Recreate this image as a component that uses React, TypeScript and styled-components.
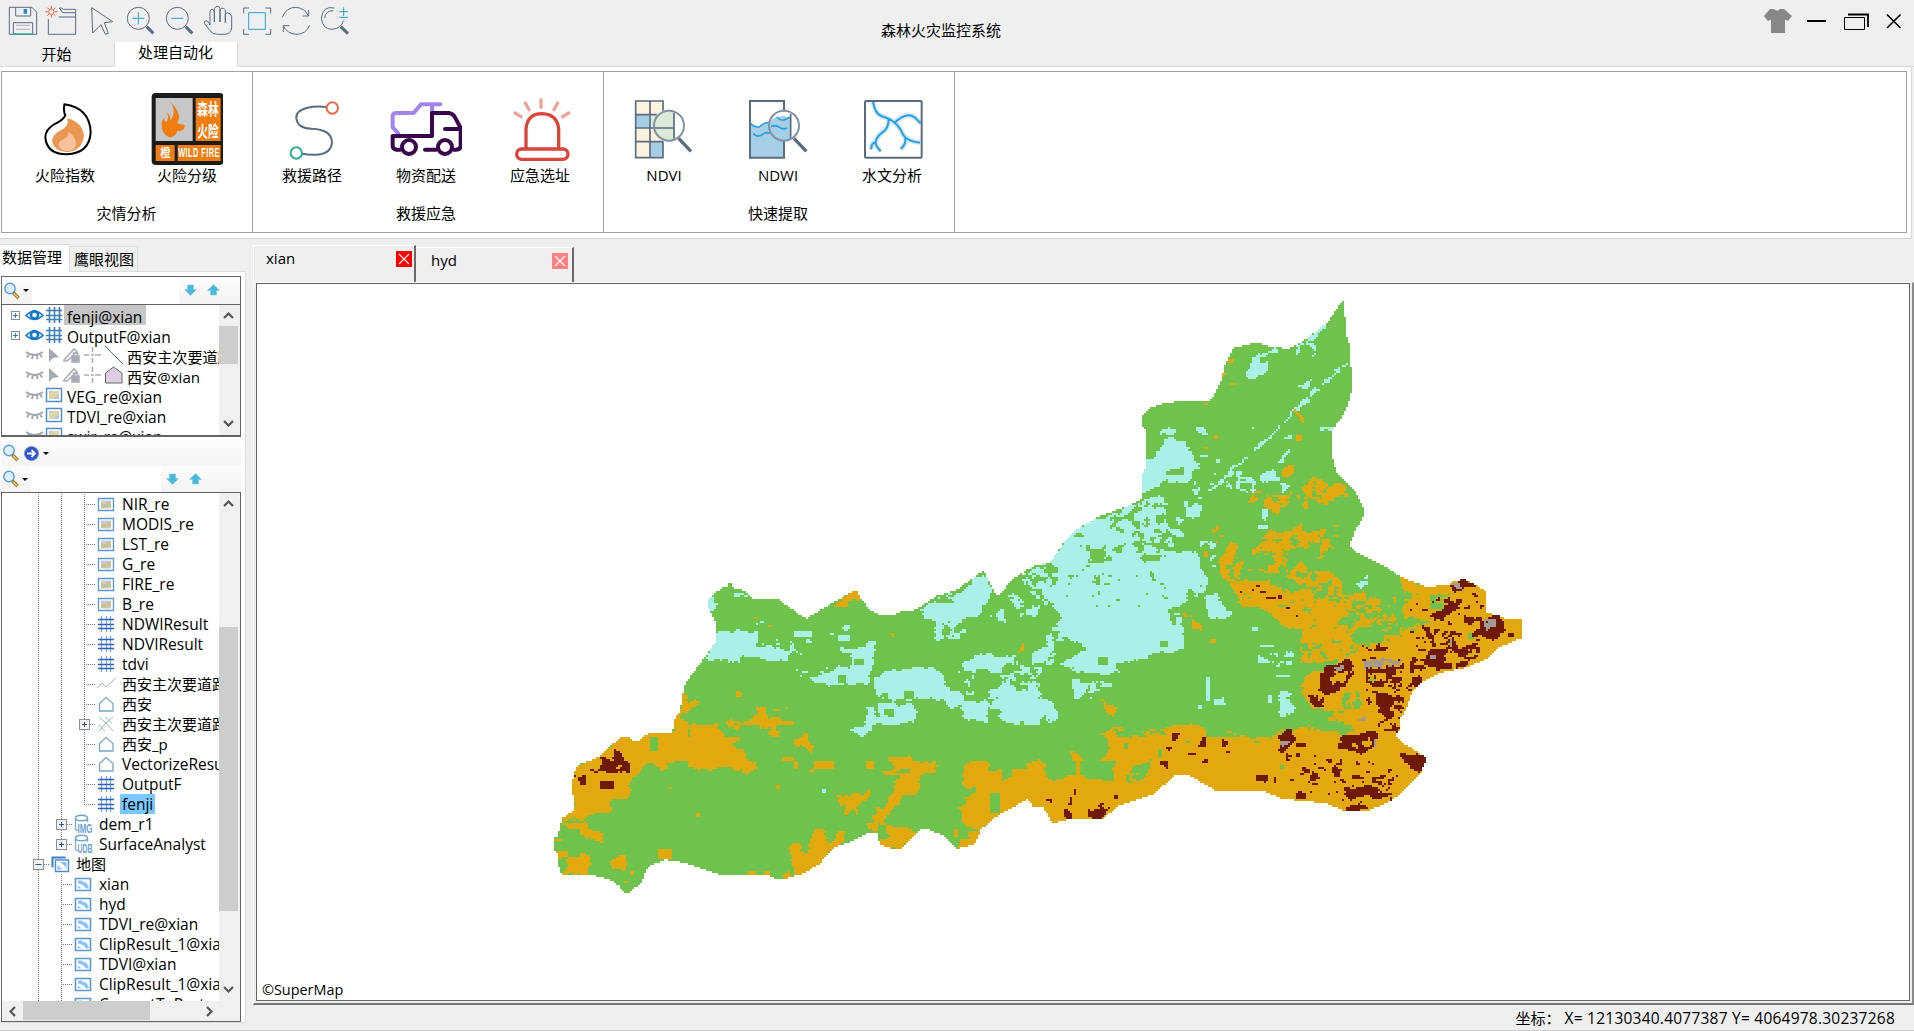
import React from 'react';
import styled, { createGlobalStyle, css } from 'styled-components';

const GlobalStyle = createGlobalStyle`
  * { box-sizing: border-box; }
  body { margin: 0; background: #efefef; overflow: hidden; }
  body, #root { font-family: 'Open Sans', 'Noto Sans CJK SC', sans-serif; font-size: 15px; color: #000; }
  svg { display: block; flex: none; }
`;

/* ---------- window ---------- */

const Window = styled.div`
  width: 1914px;
  height: 1031px;
  display: flex;
  flex-direction: column;
  background: #efefef;
`;

const TitleBar = styled.header`
  height: 67px;
  flex: none;
  display: grid;
  grid-template-columns: 700px 1fr 700px;
`;

const TitleLeft = styled.div`
  display: flex;
  flex-direction: column;
`;

const QuickTools = styled.div`
  display: flex;
  height: 42px;
  padding: 4px 0 0 3px;
`;

const RibbonTabs = styled.div`
  display: flex;
  height: 25px;
`;

const RibbonTab = styled.div<{ $active?: boolean; $w: number }>`
  width: ${p => p.$w}px;
  line-height: ${p => (p.$active ? 20 : 22)}px;
  text-align: center;
  background: ${p => (p.$active ? '#fff' : 'transparent')};
  border-bottom: 1px solid ${p => (p.$active ? '#fff' : '#d9d9d9')};
  border-left: ${p => (p.$active ? '1px solid #d9d9d9' : 'none')};
  border-right: ${p => (p.$active ? '1px solid #d9d9d9' : 'none')};
  padding-top: ${p => (p.$active ? 0 : 1)}px;
  padding-right: 1px;
`;

const TabRule = styled.div`
  flex: 1;
  border-bottom: 1px solid #d9d9d9;
`;

const Title = styled.h1`
  margin: 0;
  padding-top: 19px;
  padding-right: 32px;
  font-size: 15px;
  line-height: 22px;
  font-weight: 400;
  text-align: center;
  border-bottom: 1px solid #d9d9d9;
`;

const WindowButtons = styled.div`
  display: flex;
  justify-content: flex-end;
  border-bottom: 1px solid #d9d9d9;
  padding: 4px 2px 0 0;
`;

/* ---------- ribbon ---------- */

const Ribbon = styled.section`
  height: 172px;
  flex: none;
  padding: 4px 4px 5px 1px;
  margin-right: 2px;
  background: #fff;
  border-right: 1px solid #d9d9d9;
  border-bottom: 1px solid #d5d5d5;
`;

const RibbonFrame = styled.div`
  display: flex;
  height: 162px;
  border: 1px solid #a0a0a0;
`;

const RibbonGroup = styled.div<{ $w: number; $pad: number }>`
  width: ${p => p.$w}px;
  padding-left: ${p => p.$pad}px;
  border-right: 1px solid #a0a0a0;
  display: flex;
  flex-direction: column;
`;

const RibbonItems = styled.div`
  display: flex;
  padding-top: 21px;
`;

const RibbonItem = styled.div<{ $w: number }>`
  width: ${p => p.$w}px;
  display: flex;
  flex-direction: column;
  align-items: center;
  line-height: 20px;
`;

const GroupLabel = styled.div<{ $shift: number }>`
  margin-top: 17px;
  padding-right: ${p => p.$shift}px;
  line-height: 22px;
  text-align: center;
`;

/* ---------- body ---------- */

const Body = styled.div`
  display: flex;
  height: 767px;
  flex: none;
`;

const Sidebar = styled.aside`
  width: 246px;
  margin-right: 6px;
  padding-top: 5px;
  display: flex;
  flex-direction: column;
`;

const SideTabs = styled.div`
  display: flex;
  align-items: flex-end;
  height: 28px;
`;

const SideTab = styled.div<{ $active?: boolean }>`
  height: ${p => (p.$active ? 28 : 26)}px;
  width: ${p => (p.$active ? 70 : 68)}px;
  padding-left: ${p => (p.$active ? 2 : 4)}px;
  line-height: ${p => (p.$active ? 25 : 24)}px;
  background: ${p => (p.$active ? '#fff' : '#f0f0f0')};
  border: 1px solid #dcdcdc;
  border-left: none;
  border-bottom-color: ${p => (p.$active ? '#fff' : '#dcdcdc')};
  white-space: nowrap;
`;

const SideTabRule = styled.div`
  flex: 1;
  border-bottom: 1px solid #dcdcdc;
`;

const SidePanel = styled.div`
  height: 757px;
  background: #fff;
  border-right: 1px solid #dcdcdc;
  border-bottom: 1px solid #dcdcdc;
  padding: 4px 4px 0 1px;
  display: flex;
  flex-direction: column;
`;

const LayerBox = styled.div`
  height: 161px;
  border: 1px solid #646464;
  border-bottom-width: 2px;
  display: flex;
  flex-direction: column;
`;

const SearchBar = styled.div<{ $h: number; $left: number; $right: number }>`
  height: ${p => p.$h}px;
  flex: none;
  display: grid;
  grid-template-columns: ${p => p.$left}px 1fr ${p => p.$right}px;
`;

const BarEnd = styled.div<{ $pad: number; $gap?: number }>`
  display: flex;
  align-items: center;
  gap: ${p => p.$gap ?? 2}px;
  padding-left: ${p => p.$pad}px;
  background: linear-gradient(#fcfcfc, #f3f3f3);
`;

const Caret = styled.i`
  border: 3px solid transparent;
  border-top-color: #000;
  border-bottom: none;
`;

const LayerBody = styled.div`
  flex: 1;
  min-height: 0;
  display: flex;
  border-top: 1px solid #646464;
`;

const Rows = styled.div<{ $top?: number }>`
  flex: 1;
  min-width: 0;
  overflow: hidden;
  padding-top: ${p => p.$top ?? 0}px;
`;

const LayerRow = styled.div`
  display: flex;
  align-items: center;
  height: 20px;
  padding-left: 9px;
`;

const LayerSlot = styled.span<{ $w: number }>`
  width: ${p => p.$w}px;
  flex: none;
`;

const LayerName = styled.span<{ $sel?: boolean; $cjk?: boolean }>`
  height: 20px;
  line-height: 25px;
  padding: 0 4px 0 3px;
  font-size: ${p => (p.$cjk ? 15.1 : 15.5)}px;
  white-space: nowrap;
  flex: none;
  background: ${p => (p.$sel ? '#c6c6c6' : 'transparent')};
`;

const ScrollV = styled.div<{ $thumbTop: number; $thumb: number }>`
  width: 21px;
  flex: none;
  display: flex;
  flex-direction: column;
  background: linear-gradient(#cdcdcd, #cdcdcd) 0 ${p => p.$thumbTop}px / 19px ${p => p.$thumb}px no-repeat #f0f0f0;
  justify-content: space-between;
  padding: 5px 0;
`;

const ScrollH = styled.div`
  height: 20px;
  flex: none;
  display: flex;
  justify-content: space-between;
  align-items: center;
  padding: 0 21px 0 1px;
  background: linear-gradient(#cdcdcd, #cdcdcd) 21px 0 / 127px 19px no-repeat #f0f0f0;
`;

const NavBar = styled.div`
  height: 26px;
  margin-top: 3px;
  display: flex;
  align-items: center;
  gap: 4px;
  padding-left: 2px;
  background: linear-gradient(#fdfdfd, #f4f4f4);
`;

const TreeBox = styled.div`
  height: 530px;
  border: 1px solid #646464;
  display: flex;
  flex-direction: column;
`;

const TreeBody = styled.div`
  display: flex;
  height: 508px;
`;

const TreeRow = styled.div`
  display: flex;
  align-items: center;
  height: 20px;
  padding-left: 25px;
`;

type GuideKind = 'none' | 'line' | 'tee' | 'end' | 'plus' | 'plusend' | 'minus';

const dotsV = 'repeating-linear-gradient(to bottom, #777 0 1px, transparent 1px 2px)';
const dotsH = 'repeating-linear-gradient(to right, #777 0 1px, transparent 1px 2px)';

const Guide = styled.span<{ $kind: GuideKind }>`
  width: 23px;
  height: 20px;
  flex: none;
  display: flex;
  align-items: center;
  padding-left: 6px;
  ${p =>
    p.$kind !== 'none' &&
    css`
      background-repeat: no-repeat;
      background-image: ${dotsV}, ${p.$kind === 'line' ? 'none' : dotsH};
      background-size: 1px ${p.$kind === 'end' || p.$kind === 'plusend' ? '10px' : '20px'}, 12px 1px;
      background-position: 11px 0, 11px 10px;
    `}
`;

const TreeName = styled.span<{ $sel?: boolean; $cjk?: boolean }>`
  height: 20px;
  line-height: 20px;
  margin-left: 4px;
  padding: 0 2px;
  white-space: nowrap;
  flex: none;
  font-size: ${p => (p.$cjk ? 15 : 15.5)}px;
  background: ${p => (p.$sel ? '#7ac8ff' : 'transparent')};
`;

/* ---------- documents ---------- */

const Documents = styled.main`
  flex: 1;
  display: flex;
  flex-direction: column;
  padding-top: 5px;
`;

const DocTabs = styled.div`
  display: flex;
  align-items: flex-end;
  height: 38px;
  padding-left: 1px;
`;

const DocTab = styled.div<{ $active?: boolean; $w: number }>`
  width: ${p => p.$w}px;
  height: ${p => (p.$active ? 37 : 35)}px;
  display: flex;
  justify-content: space-between;
  align-items: flex-start;
  padding: ${p => (p.$active ? '5px 2px 0 12px' : '5px 4px 0 15px')};
  line-height: 15px;
  border-top: 1px solid #fff;
  border-left: ${p => (p.$active ? '1px solid #fff' : 'none')};
  border-right: 2px solid #696969;
`;

const CloseBox = styled.span<{ $color: string }>`
  width: 16px;
  height: 16px;
  background: ${p => p.$color};
`;

const MapFrame = styled.div`
  height: 723px;
  margin-left: 1px;
  padding: 0 2px 2px 2px;
  border-top: 1px solid #fff;
  border-left: 1px solid #fff;
  border-right: 2px solid #8a8a8a;
  border-bottom: 2px solid #777;
`;

const MapView = styled.div`
  height: 718px;
  background: #fff;
  border: 1px solid #646464;
  position: relative;
  overflow: hidden;
`;

const MapCredit = styled.span`
  position: absolute;
  left: 5px;
  bottom: 0;
  font-size: 14.4px;
  line-height: 20px;
`;

const StatusBar = styled.footer`
  flex: 1;
  display: flex;
  justify-content: flex-end;
  gap: 4px;
  padding: 1px 19px 0 0;
  line-height: 22px;
  border-bottom: 1px solid #cbcbcb;
`;

const Coords = styled.span`
  font-size: 15.5px;
  letter-spacing: 0.23px;
  white-space: pre;
`;

/* ---------- fire level raster ---------- */

type Cls = 'G' | 'O' | 'W' | 'D' | 'S';
type Sheet = 'A' | 'B' | 'C';

const palette: Record<Cls, string> = {
  G: '#6fc34c',
  O: '#e2a90f',
  W: '#aaf0e9',
  D: '#6e1a06',
  S: '#a59a93',
};

// Each survey sheet has its own origin and its units per pixel on both axes.
const sheets: Record<Sheet, [number, number, number, number]> = {
  A: [540, 560, 3, 3],
  B: [1000, 280, 3, 3],
  C: [1000, 560, 2.91, 2.99],
};

const parse = (sheet: Sheet, text: string): [number, number][] => {
  const [ox, oy, kx, ky] = sheets[sheet];
  return text.split(' ').map(p => {
    const [x, y] = p.split(',').map(Number);
    return [ox + x / kx, oy + y / ky];
  });
};

const outline = [
  ...parse('A', '42,830 54,828 66,775 78,770 102,748 96,665 108,625 120,613 180,590 213,555 245,532 272,532 275,543 295,543 327,519 397,519 408,465 420,455 432,380 450,350 492,295 515,262 528,245 530,190 505,142 505,118 516,105 545,85 563,80 565,70 575,70 577,82 620,95 640,116 715,118 770,158 800,176 850,145 940,93 952,93 965,118 990,150 1020,165 1060,165 1085,155 1125,150 1190,108 1250,90 1325,35 1332,35 1355,78 1370,108 1380,105 1400,80 1450,42 1490,10'),
  ...parse('B', '0,935 40,895 105,855 150,848 185,795 225,752 300,708 370,683 427,658 427,580 438,565 438,450 427,438 427,405 445,387 475,374 545,362 633,360 668,295 670,262 700,205 770,187 820,203 870,205 915,180 985,125 1025,65 1034,57 1036,160 1047,190 1050,250 1059,280 1057,320 1045,370 1030,405 1000,445 996,460 996,525 1010,577 1060,625 1083,670 1095,690 1090,712 1072,740 1047,795 1075,820 1150,857'),
  ...parse('C', '1170,52 1240,80 1305,75 1315,63 1355,58 1390,78 1414,95 1414,155 1455,168 1475,178 1519,178 1519,233 1450,262 1410,300 1350,323 1280,337 1225,368 1200,395 1187,432 1175,462 1163,475 1163,508 1152,525 1165,542 1237,588 1237,608 1223,640 1190,675 1140,720 1070,750 1000,750 950,727 870,720 815,712 765,690 628,690 545,640 510,640 450,700 410,712 345,735 300,773 210,773 165,785 150,785 140,760 125,740 98,738 78,715 40,738 0,760'),
  ...parse('A', '1350,785 1322,810 1305,852 1257,865 1250,865 1218,832 1172,810 1140,810 1080,868 1060,868 1020,855 1013,820 985,820 930,845 885,860 835,915 790,940 735,957 710,957 685,945 540,945 440,910 375,898 322,922 305,968 262,1000 255,1000 235,975 205,958 160,945 66,945 54,910 54,882 42,872'),
];

const zones: [Cls, Sheet, number, string][] = [
  // western plain
  ['W', 'A', 1, '528,213 652,213 655,235 690,235 715,240 720,270 748,275 748,298 700,303 652,298 640,290 603,290 600,310 570,308 560,300 488,298 515,265 528,245'],
  ['G', 'A', 0.5, '652,213 740,225 740,265 655,255'],
  ['W', 'A', 1, '765,213 818,213 818,222 810,234 765,234'],
  ['W', 'A', 1, '500,118 525,110 525,130 538,130 515,155 500,142'],
  ['W', 'A', 0.6, '580,100 625,95 625,112 585,110'],
  ['W', 'A', 0.5, '610,190 650,178 675,178 672,190 630,195'],
  ['W', 'A', 1, '895,228 930,228 930,245 895,245'],
  ['W', 'A', 0.5, '868,225 880,197 930,197 925,212'],
  ['W', 'A', 1, '930,275 965,265 990,235 1010,240 1000,280 1000,325 990,330 990,372 895,372 858,372 862,350 895,315 930,322'],
  ['W', 'A', 0.8, '900,262 930,268 930,280 900,275'],
  ['W', 'A', 0.9, '808,345 845,348 870,318 890,330 845,372 820,370'],
  ['G', 'A', 1, '893,348 918,348 918,372 893,372'],
  ['G', 'A', 0.7, '940,300 975,300 975,318 940,318'],
  ['W', 'A', 1, '1002,348 1040,338 1085,325 1175,318 1190,335 1210,345 1220,380 1268,400 1265,430 1250,443 1215,443 1210,420 1040,420 1015,410 1002,370'],
  ['G', 'A', 1, '1090,396 1125,396 1125,420 1090,420'],
  ['G', 'A', 1, '1027,396 1042,400 1042,415 1018,413'],
  ['W', 'A', 1, '978,445 1002,445 1002,470 1015,470 1015,432 1125,432 1125,470 1115,482 1085,495 988,495 985,525 970,530 930,512 978,500'],
  ['G', 'A', 1, '1035,445 1065,445 1065,476 1035,465'],
  ['W', 'A', 1, '1145,150 1185,110 1260,95 1325,45 1340,50 1360,95 1350,115 1325,150 1320,165 1270,178 1210,190 1210,238 1185,238 1185,185 1155,175'],
  ['G', 'A', 0.8, '1190,108 1245,105 1245,128 1190,128'],
  ['W', 'A', 0.55, '1210,190 1262,175 1283,215 1283,238 1240,238 1210,235'],
  ['W', 'A', 0.85, '1355,165 1385,145 1398,150 1400,188 1380,188'],
  ['W', 'A', 1, '1460,150 1500,135 1495,160 1460,165'],
  ['W', 'A', 0.6, '1440,50 1490,8 1500,90 1455,70'],
  ['W', 'A', 0.25, '1400,100 1450,100 1500,120 1400,135'],
  ['W', 'A', 1, '1268,315 1290,295 1340,285 1385,290 1440,292 1395,315 1375,335 1325,330 1270,333'],
  ['W', 'A', 1, '1478,280 1500,265 1500,310 1478,310'],
  ['W', 'A', 1, '1268,420 1345,420 1345,483 1325,483 1268,472'],
  ['W', 'A', 0.88, '1345,395 1410,368 1425,390 1500,380 1500,495 1400,490 1380,470 1380,445 1345,440'],
  ['W', 'A', 0.25, '1250,340 1300,340 1300,400 1260,410'],
  ['W', 'A', 0.3, '1400,330 1500,320 1500,380 1400,370'],
  ['W', 'A', 1, '846,690 858,690 858,702 846,702'],
  ['W', 'A', 0.08, '720,240 860,240 860,350 720,350'],

  ['O', 'A', 1, '855,148 945,90 955,90 968,112 930,125 925,137 905,143 890,132'],
  ['O', 'A', 1, '432,405 443,405 445,420 480,425 480,435 455,450 420,470 445,483 445,496 528,496 550,525 603,531 603,543 565,555 615,570 615,603 650,605 650,625 625,638 590,632 555,625 540,625 445,628 443,600 385,603 385,625 360,628 330,605 310,625 305,638 275,645 273,712 213,715 210,748 200,762 150,762 135,780 80,776 60,765 102,748 90,665 100,625 180,585 245,525 272,525 295,540 327,515 397,515 405,465 420,460'],
  ['G', 'A', 1, '333,532 357,532 357,575 333,570'],
  ['G', 'A', 1, '443,508 450,508 450,530 443,530'],
  ['O', 'A', 1, '65,788 135,785 150,808 185,812 188,845 155,845 130,830 110,810 75,808'],
  ['O', 'A', 1, '36,835 66,835 66,845 36,845'],
  ['O', 'A', 1, '36,870 80,872 85,890 60,896 36,896'],
  ['O', 'A', 1, '78,897 150,880 150,933 125,948 60,948 60,933 78,933'],
  ['O', 'A', 1, '213,897 258,885 260,933 213,933'],
  ['O', 'A', 1, '357,870 395,870 395,896 375,900 357,896'],
  ['O', 'A', 1, '273,935 285,935 285,945 273,945'],
  ['O', 'A', 1, '250,963 267,963 267,969 250,969'],
  ['O', 'A', 1, '468,762 480,762 480,774 468,774'],
  ['O', 'A', 1, '590,390 608,402 608,412 590,412'],
  ['O', 'A', 1, '650,445 675,445 675,465 720,475 745,487 710,490 708,508 665,505 660,495 558,495 558,484 632,484 635,472 650,472'],
  ['O', 'A', 1, '715,485 765,485 765,494 715,494'],
  ['O', 'A', 1, '575,498 603,498 590,512'],
  ['O', 'A', 1, '700,445 718,445 718,453 700,453'],
  ['O', 'A', 1, '730,438 747,440 747,452'],
  ['O', 'A', 0.8, '686,516 718,515 718,530 686,528'],
  ['O', 'A', 1, '760,532 785,530 785,520 808,520 808,535 812,545 830,552 800,578 795,560 760,555'],
  ['O', 'A', 1, '725,592 760,592 760,603 725,603'],
  ['O', 'A', 1, '760,603 777,603 777,625 760,625'],
  ['O', 'A', 1, '820,603 882,603 882,628 820,628'],
  ['O', 'A', 1, '978,603 1002,603 1002,628 978,628'],
  ['O', 'A', 1, '384,684 396,684 396,690 384,690'],
  ['O', 'A', 1, '710,678 722,678 722,690 710,690'],
  ['O', 'A', 1, '808,628 820,628 820,638 808,638'],
  ['O', 'A', 1, '1052,592 1113,592 1113,603 1185,603 1185,638 1138,640 1138,675 1125,702 1085,705 1060,750 1035,775 1035,798 1090,798 1120,815 1135,820 1080,875 1020,862 1012,830 1040,835 1040,800 1015,797 1010,815 1000,815 980,795 978,787 1002,785 1002,762 1015,740 1040,735 1040,705 1065,700 1065,665 1077,640 1015,638 1055,625'],
  ['G', 'A', 1, '1113,626 1085,628 1065,638 1113,638'],
  ['O', 'A', 1, '893,702 978,702 990,690 985,715 955,740 952,772 943,765 940,740 928,760 918,760 918,738 895,738'],
  ['O', 'A', 1, '748,846 783,846 783,880 808,880 808,835 820,810 857,810 857,845 885,848 893,810 917,810 917,845 870,880 835,920 790,945 760,948 760,897 748,895'],
  ['O', 'A', 1, '625,933 650,933 650,944 625,944'],
  ['O', 'A', 1, '675,933 688,933 688,946 675,946'],
  ['O', 'A', 1, '725,945 747,935 757,950 735,960'],
  ['O', 'A', 1, '1270,640 1283,603 1343,603 1343,628 1380,628 1380,660 1415,665 1415,628 1465,628 1465,603 1505,603 1505,765 1480,745 1460,720 1415,750 1350,790 1325,815 1308,858 1257,870 1257,835 1283,845 1283,810 1320,805 1290,795 1268,785 1270,762 1258,745 1283,735 1265,705 1308,700 1308,690 1270,680'],
  ['G', 'A', 1, '1350,702 1380,702 1380,762 1350,762'],
  ['O', 'A', 1, '1245,810 1257,810 1257,832 1245,832'],
  ['O', 'A', 1, '1052,220 1065,220 1058,233'],
  ['O', 'A', 0.8, '638,175 656,166 656,174'],
  ['O', 'A', 1, '687,195 699,195 699,201 687,201'],
  ['O', 'A', 1, '1433,280 1450,250 1453,270'],
  ['D', 'A', 1, '213,585 225,570 248,580 248,603 265,603 262,638 215,640 150,638 152,628 180,625 183,592 200,595 205,605 215,600'],
  ['D', 'A', 1, '178,663 225,663 225,685 178,690'],
  ['D', 'A', 1, '113,655 138,643 138,677 120,672'],
  ['D', 'A', 1, '102,645 108,645 108,652 102,652'],
  ['O', 'A', 1, '225,625 245,612 245,618 228,632'],

  // north spur
  ['W', 'B', 0.85, '475,465 495,438 530,450 525,462'],
  ['W', 'B', 1, '487,485 515,470 525,485 557,485 557,520 575,520 580,545 610,560 570,575 572,600 550,615 510,610 500,595 475,620 425,635 420,580 440,545 480,515'],
  ['G', 'B', 1, '495,573 550,562 550,585 500,585'],
  ['W', 'B', 0.5, '545,625 600,620 600,645 550,640'],
  ['W', 'B', 1, '190,762 225,745 300,715 330,710 410,670 440,655 490,645 500,680 500,760 520,780 530,820 595,820 600,870 625,890 600,920 560,930 555,975 505,975 510,1000 540,1010 545,1080 200,1080 170,1040 200,1020 155,980 130,935 90,920 70,890 120,850 145,845 185,795'],
  ['G', 'B', 0.3, '400,660 500,660 530,800 470,800 400,700'],
  ['G', 'B', 0.45, '320,725 350,690 430,675 420,740 340,765'],
  ['G', 'B', 1, '270,810 305,805 320,828 300,850 275,845'],
  ['G', 'B', 0.35, '240,800 370,790 360,840 260,855'],
  ['G', 'B', 1, '415,828 430,815 485,820 480,842 440,850'],
  ['G', 'B', 0.45, '390,750 520,750 520,830 400,820'],
  ['G', 'B', 1, '220,765 240,755 250,768 225,772'],
  ['G', 'B', 0.5, '60,880 120,850 180,840 165,920 80,920'],
  ['G', 'B', 0.03, '200,870 500,870 500,1060 200,1060'],
  ['G', 'B', 1, '303,987 321,987 321,999 303,999'],
  ['W', 'B', 0.8, '555,658 605,655 608,690 590,720 555,715'],
  ['W', 'B', 0.4, '500,700 560,715 560,770 510,760'],
  ['W', 'B', 1, '620,945 645,935 660,970 690,990 690,1015 640,1015 620,1005'],
  ['W', 'B', 0.6, '575,925 600,895 625,890 620,950 600,965'],
  ['W', 'B', 1, '0,985 15,985 15,1025 0,1025'],
  ['W', 'B', 0.3, '30,960 130,930 170,990 60,1010'],
  ['W', 'B', 0.5, '130,1060 200,1010 200,1080 130,1080'],
  ['W', 'B', 0.8, '735,285 745,250 770,222 803,215 803,285 750,290'],
  ['G', 'B', 0.8, '775,235 815,230 815,250 785,250'],
  ['W', 'B', 0.8, '800,222 825,200 840,215'],
  ['W', 'B', 0.45, '885,200 945,190 945,232 890,230'],
  ['W', 'B', 1, '920,180 970,120 975,135 958,160 945,180'],
  ['W', 'B', 0.7, '893,318 935,298 925,330'],
  ['W', 'B', 0.8, '1040,250 1040,260 960,328 885,397 800,480 690,588 615,650 610,646 685,578 795,476 880,388 955,320'],
  ['W', 'B', 0.6, '585,440 610,440 625,465 600,465'],
  ['W', 'B', 1, '780,580 812,575 820,560 840,600 800,610 780,600'],
  ['W', 'B', 0.5, '675,610 720,570 750,570 770,635 700,635'],
  ['W', 'B', 1, '855,515 870,502 875,515 858,520 848,548 830,545'],
  ['W', 'B', 1, '850,472 875,465 875,480 850,478'],
  ['W', 'B', 0.8, '958,438 1005,442 1000,453 960,450'],
  ['W', 'B', 0.8, '840,605 870,615 850,642'],
  ['W', 'B', 1, '772,733 803,737 803,748 772,748'],
  ['W', 'B', 0.8, '785,685 803,690 800,725 785,715'],
  ['W', 'B', 0.7, '738,440 765,433 760,446'],
  ['W', 'B', 0.12, '560,500 660,540 640,620 580,620'],
  ['W', 'B', 0.3, '600,790 660,790 650,860 630,880'],

  ['O', 'B', 1, '680,235 705,235 705,248 690,248 680,245'],
  ['O', 'B', 1, '665,268 680,285 665,290'],
  ['O', 'B', 1, '693,312 710,312 710,318 693,318'],
  ['O', 'B', 0.8, '610,367 627,367 615,378'],
  ['O', 'B', 0.8, '875,385 890,390 915,420 915,432 905,430 893,405'],
  ['O', 'B', 1, '887,468 905,468 905,483 890,480'],
  ['O', 'B', 0.7, '693,470 705,460 722,480 700,478'],
  ['O', 'B', 0.85, '850,560 885,555 885,570 870,590 845,595'],
  ['O', 'B', 0.72, '905,630 935,590 970,605 1040,620 1040,645 1000,655 1000,680 940,665'],
  ['O', 'B', 0.6, '735,665 760,640 800,628 800,640 760,670'],
  ['O', 'B', 0.75, '785,655 870,650 875,665 830,700 800,685'],
  ['O', 'B', 0.35, '870,625 930,650 920,700 880,650'],
  ['O', 'B', 0.8, '800,755 890,745 900,720 910,750 960,755 960,780 930,800 850,810 850,850 870,860 820,860 820,820 770,800 780,780'],
  ['O', 'B', 0.4, '960,750 1020,735 1025,780 960,835'],
  ['O', 'B', 0.8, '655,860 665,830 680,815 690,785 715,800 700,830 715,870 720,905 680,905 665,890'],
  ['O', 'B', 0.4, '700,810 860,810 860,880 710,880'],
  ['O', 'B', 0.7, '860,885 905,845 940,880 990,870 1030,910 1030,950 980,960 930,930'],
  ['O', 'B', 0.97, '685,905 720,900 810,905 850,930 920,925 960,955 1020,970 1040,1000 1020,1020 1010,1050 1050,1080 930,1080 920,1045 870,1050 820,1010 790,985 725,975 705,940'],
  ['O', 'B', 0.6, '1030,950 1090,930 1105,960 1080,975 1030,1000'],
  ['O', 'B', 0.65, '1060,1020 1140,1005 1140,1035 1070,1050 1050,1080 1030,1040'],
  ['O', 'B', 0.35, '1130,1010 1190,1000 1200,1080 1160,1080'],
  ['O', 'B', 1, '610,815 627,815 627,833 610,833'],
  ['O', 'B', 0.6, '545,998 575,1015 605,1045 600,1052 575,1050 575,1025'],
  ['O', 'B', 0.2, '620,735 680,735 660,800 620,760'],
  ['O', 'B', 1, '645,467 657,467 653,480 645,480'],
  ['O', 'B', 1, '615,502 627,502 627,508 615,508'],
  ['D', 'B', 1, '783,933 797,933 797,940 783,940'],
  ['D', 'B', 0.8, '798,950 848,946 848,957 798,957'],
  ['D', 'B', 1, '858,980 870,980 870,987 858,987'],
  ['D', 'B', 1, '770,914 778,914 778,920 770,920'],
  ['D', 'B', 1, '758,927 765,927 765,933 758,933'],
  ['D', 'B', 1, '721,932 729,932 729,939 721,939'],
  ['D', 'B', 1, '887,1004 895,1004 895,1011 887,1011'],

  // central basin and eastern hills
  ['W', 'C', 1, '185,140 520,140 538,230 538,270 440,285 345,308 340,340 215,335 215,320 180,308 215,285 255,270 240,245 205,235 165,200 175,190'],
  ['G', 'C', 1, '283,290 317,290 317,312 283,312'],
  ['G', 'C', 0.7, '485,150 540,145 540,200 500,205'],
  ['G', 'C', 1, '465,240 490,240 490,258 465,258'],
  ['W', 'C', 0.92, '92,275 135,255 150,220 158,310 100,310'],
  ['W', 'C', 0.7, '213,338 238,340 255,380 250,400 213,415'],
  ['W', 'C', 0.4, '250,360 290,345 345,368 290,385 260,410'],
  ['W', 'C', 0.93, '0,370 40,375 40,400 80,395 90,365 105,385 105,410 165,430 165,482 35,490 0,475'],
  ['W', 'C', 0.25, '0,280 100,290 100,380 0,350'],
  ['W', 'C', 1, '600,348 612,348 612,420 600,420'],
  ['W', 'C', 0.6, '612,400 660,425 655,442 620,430'],
  ['W', 'C', 1, '578,432 590,432 590,443 578,443'],
  ['W', 'C', 1, '758,252 797,252 797,262 758,262'],
  ['W', 'C', 0.45, '752,285 795,280 795,305 752,308'],
  ['W', 'C', 0.45, '800,280 870,270 865,305 810,320'],
  ['W', 'C', 0.5, '812,395 858,400 858,450 815,480'],
  ['W', 'C', 1, '779,403 790,403 790,430 779,430'],
  ['W', 'C', 1, '802,342 843,342 843,352 802,352'],
  ['W', 'C', 1, '735,202 750,202 750,213 735,213'],
  ['W', 'C', 0.75, '1035,75 1070,42 1068,72 1050,85'],
  ['O', 'C', 0.75, '880,200 1000,200 1045,260 1000,290 930,310 880,310 875,260'],
  ['O', 'C', 0.35, '980,120 1150,110 1150,200 1040,190 990,160'],
  ['O', 'C', 1, '612,235 630,235 630,250 612,245'],
  ['O', 'C', 0.6, '293,420 345,445 325,470 312,460'],
  ['O', 'C', 1, '1170,40 1240,78 1305,70 1355,50 1425,85 1425,150 1530,170 1530,240 1450,275 1350,335 1280,345 1235,368 1200,432 1175,475 1175,508 1160,525 1175,535 1245,588 1245,608 1223,650 1140,730 1070,760 1000,760 950,735 815,720 765,700 628,700 545,650 510,650 450,710 345,745 300,783 165,795 150,795 125,750 98,745 78,725 0,770 0,660 35,650 35,628 80,625 80,603 130,603 132,655 150,662 185,662 190,640 225,640 245,645 270,662 330,660 330,603 285,600 315,570 320,540 295,515 335,498 400,520 485,498 590,498 600,520 680,515 700,530 800,530 815,515 860,505 890,500 1000,515 1040,500 960,475 950,455 900,430 875,400 880,350 950,330 1000,290 1045,270 1050,255 1130,240 1165,230 1165,205 1250,190 1175,170'],
  ['G', 'C', 1, '600,512 680,518 690,530 600,530'],
  ['G', 'C', 0.5, '335,505 500,498 500,525 340,530'],
  ['G', 'C', 1, '400,520 418,515 418,532 400,532'],
  ['G', 'C', 1, '360,545 375,545 375,565 360,565'],
  ['G', 'C', 1, '459,568 470,568 470,590 459,590'],
  ['G', 'C', 0.7, '365,630 440,600 440,625 400,662 368,660'],
  ['O', 'C', 1, '222,600 235,600 235,645 222,645'],
  ['O', 'C', 0.7, '205,570 245,590 245,602 210,602'],
  ['G', 'C', 0.8, '540,543 560,543 560,549 540,549'],
  ['G', 'C', 1, '740,543 758,543 758,549 740,549'],
  ['G', 'C', 0.6, '995,400 1045,385 1050,450 1000,440'],
  ['G', 'C', 0.4, '870,440 1010,455 1000,520 860,510'],
  ['G', 'C', 0.85, '1250,108 1305,103 1290,145 1255,140'],
  ['G', 'C', 0.5, '1170,80 1220,100 1190,125 1170,120'],
  ['G', 'C', 0.55, '1160,195 1250,185 1210,215 1165,215'],
  ['G', 'C', 1, '815,610 828,610 828,622 815,622'],
  ['G', 'C', 0.7, '1075,350 1095,350 1095,370 1075,370'],
  ['G', 'C', 1, '1360,220 1377,220 1377,236 1360,236'],

  ['D', 'C', 0.1, '1180,110 1414,95 1400,240 1200,280'],
  ['D', 'C', 0.13, '820,580 1150,600 1100,700 880,700'],
  ['D', 'C', 0.25, '1060,380 1190,380 1150,520 1090,500'],
  ['D', 'C', 0.95, '1308,72 1355,60 1388,80 1380,88 1350,80 1345,95 1320,92'],
  ['D', 'C', 0.95, '1250,160 1290,150 1335,115 1350,118 1340,140 1305,160 1260,182'],
  ['D', 'C', 0.9, '1348,165 1375,163 1368,190 1348,188'],
  ['D', 'C', 0.97, '1400,178 1450,165 1475,195 1470,215 1440,238 1400,232'],
  ['S', 'C', 0.75, '1405,180 1440,172 1445,205 1415,210'],
  ['D', 'C', 1, '1478,220 1495,218 1495,232 1478,232'],
  ['D', 'C', 0.93, '1235,300 1255,270 1310,265 1310,235 1330,240 1335,265 1400,245 1390,285 1350,320 1270,328 1235,320'],
  ['O', 'C', 1, '1295,290 1315,275 1345,290 1335,305 1300,308'],
  ['S', 'C', 1, '1307,238 1313,238 1313,262 1307,262'],
  ['S', 'C', 1, '1254,282 1266,282 1266,294 1254,294'],
  ['D', 'C', 0.45, '1195,295 1240,290 1240,330 1200,335'],
  ['D', 'C', 0.9, '1197,350 1230,345 1215,375 1180,385'],
  ['D', 'C', 0.75, '1310,210 1345,220 1335,240 1310,232'],
  ['D', 'C', 1, '1262,208 1283,203 1275,220 1260,225'],
  ['D', 'C', 0.4, '1380,120 1414,112 1400,155'],
  ['D', 'C', 0.8, '1055,257 1100,248 1130,260 1120,275 1080,275'],
  ['D', 'C', 0.7, '1060,295 1170,290 1175,350 1165,375 1110,380 1060,370'],
  ['O', 'C', 0.8, '1085,335 1125,335 1120,362 1085,365'],
  ['S', 'C', 0.95, '1060,298 1120,296 1115,330 1065,325'],
  ['S', 'C', 0.5, '1120,298 1172,298 1140,330 1120,318'],
  ['D', 'C', 0.88, '955,318 1020,300 1030,345 1000,380 960,400 925,390 938,345'],
  ['O', 'C', 1, '960,350 985,335 1010,340 1000,365 970,370'],
  ['S', 'C', 0.9, '973,322 1003,312 1003,325 985,335'],
  ['D', 'C', 0.7, '890,408 950,408 935,440 900,430'],
  ['D', 'C', 0.75, '1085,395 1150,405 1140,475 1110,470 1090,430'],
  ['D', 'C', 0.75, '980,555 1000,520 1100,515 1095,560 1050,580 1010,565'],
  ['S', 'C', 1, '1089,537 1096,537 1096,560 1089,560'],
  ['S', 'C', 0.8, '1040,475 1065,470 1065,480 1040,480'],
  ['D', 'C', 0.8, '1120,505 1162,500 1160,515 1120,512'],
  ['D', 'C', 1, '1163,570 1185,582 1235,585 1240,608 1222,640 1200,625 1170,595'],
  ['D', 'C', 0.93, '998,685 1080,672 1110,690 1145,712 1100,715 1060,705 1025,725 1000,715'],
  ['D', 'C', 0.9, '1000,745 1050,725 1070,745 1020,755'],
  ['D', 'C', 0.7, '1098,668 1165,640 1130,685'],
  ['D', 'C', 0.65, '950,600 990,610 1005,670 980,660'],
  ['D', 'C', 0.85, '900,650 912,632 928,642 928,672 910,672'],
  ['D', 'C', 1, '745,640 783,640 775,665 745,660'],
  ['D', 'C', 1, '860,700 875,690 893,700 890,715 865,718'],
  ['D', 'C', 1, '796,650 806,650 806,668 796,668'],
  ['D', 'C', 1, '840,653 858,653 850,668'],
  ['D', 'C', 0.75, '810,520 850,510 862,530 830,575 810,575'],
  ['S', 'C', 0.9, '815,543 848,543 820,560'],
  ['D', 'C', 1, '860,548 888,550 888,560 860,558'],
  ['D', 'C', 1, '499,513 522,520 515,535 500,545'],
  ['D', 'C', 1, '578,552 590,532 600,532 600,560 580,560'],
  ['D', 'C', 1, '643,533 662,545 660,560 645,558'],
  ['D', 'C', 1, '650,568 675,570 665,580'],
  ['D', 'C', 0.6, '540,578 600,576 608,605 590,605 585,590'],
  ['D', 'C', 0.7, '460,605 487,600 487,625'],
  ['D', 'C', 1, '482,562 499,562 495,573'],
  ['D', 'C', 1, '183,745 197,745 210,762 210,773 190,775'],
  ['D', 'C', 1, '202,710 212,708 208,735 200,735'],
  ['D', 'C', 1, '216,685 224,685 222,702 214,702'],
  ['D', 'C', 0.8, '130,713 155,718 152,730'],
  ['D', 'C', 0.95, '258,745 268,760 285,740 318,738 300,773 262,773'],
  ['D', 'C', 1, '332,702 343,702 343,713 332,713'],
  ['S', 'C', 0.85, '1315,72 1335,68 1348,90 1330,88'],
];

const CELL = 2;
const X0 = 552;
const Y0 = 297;
const COLS = 488;
const ROWS = 302;

const hash = (x: number, y: number, seed: number) => {
  let h = (x * 374761393 + y * 668265263 + seed * 982451653) | 0;
  h = Math.imul(h ^ (h >>> 13), 1274126177);
  return ((h ^ (h >>> 16)) >>> 0) / 4294967296;
};

// Interpolated value noise mixed with a fine grain, stretched to roughly 0..1.
const clump = (c: number, r: number, seed: number) => {
  const u = c / 2.7;
  const v = r / 2.2;
  const iu = Math.floor(u);
  const iv = Math.floor(v);
  const fu = u - iu;
  const fv = v - iv;
  const top = hash(iu, iv, seed) * (1 - fu) + hash(iu + 1, iv, seed) * fu;
  const bottom = hash(iu, iv + 1, seed) * (1 - fu) + hash(iu + 1, iv + 1, seed) * fu;
  const grain = hash(Math.floor(c / 2), r, seed + 7);
  const m = (top * (1 - fv) + bottom * fv) * 0.78 + grain * 0.22;
  return (m - 0.5) * 1.75 + 0.5;
};

const inside = (pts: [number, number][], x: number, y: number) => {
  let hit = false;
  for (let i = 0, j = pts.length - 1; i < pts.length; j = i++) {
    const [xi, yi] = pts[i];
    const [xj, yj] = pts[j];
    if (yi > y !== yj > y && x < ((xj - xi) * (y - yi)) / (yj - yi) + xi) hit = !hit;
  }
  return hit;
};

const rasterize = () => {
  const grid: (Cls | null)[] = new Array(COLS * ROWS).fill(null);
  for (let r = 0; r < ROWS; r++)
    for (let c = 0; c < COLS; c++)
      if (inside(outline, X0 + c * CELL + 1, Y0 + r * CELL + 1)) grid[r * COLS + c] = 'G';

  zones.forEach(([cls, sheet, density, text], seed) => {
    const pts = parse(sheet, text);
    const xs = pts.map(p => p[0]);
    const ys = pts.map(p => p[1]);
    const big = Math.max(...xs) - Math.min(...xs) > 14 && Math.max(...ys) - Math.min(...ys) > 10;
    const amp = big ? 4 : 0;
    const c0 = Math.max(0, Math.floor((Math.min(...xs) - X0) / CELL) - 2);
    const c1 = Math.min(COLS - 1, Math.ceil((Math.max(...xs) - X0) / CELL) + 2);
    const r0 = Math.max(0, Math.floor((Math.min(...ys) - Y0) / CELL) - 2);
    const r1 = Math.min(ROWS - 1, Math.ceil((Math.max(...ys) - Y0) / CELL) + 2);
    for (let r = r0; r <= r1; r++)
      for (let c = c0; c <= c1; c++) {
        const i = r * COLS + c;
        if (!grid[i]) continue;
        const dx = (clump(c, r, 900 + seed) - 0.5) * amp;
        const dy = (clump(c, r, 1900 + seed) - 0.5) * amp;
        if (!inside(pts, X0 + c * CELL + 1 + dx, Y0 + r * CELL + 1 + dy)) continue;
        if (density < 1 && clump(c, r, seed) > density) continue;
        grid[i] = cls;
      }
  });

  const paths: Record<Cls, string> = { G: '', O: '', W: '', D: '', S: '' };
  for (let r = 0; r < ROWS; r++) {
    let c = 0;
    while (c < COLS) {
      const cls = grid[r * COLS + c];
      let e = c + 1;
      while (e < COLS && grid[r * COLS + e] === cls) e++;
      if (cls) paths[cls] += `M${X0 + c * CELL} ${Y0 + r * CELL}h${(e - c) * CELL}v${CELL}h${(c - e) * CELL}z`;
      c = e;
    }
  }
  return paths;
};

const rasterPaths = rasterize();

const FireMap = () => (
  <svg width="1652" height="716" viewBox="257 284 1652 716" shapeRendering="crispEdges">
    {(Object.keys(rasterPaths) as Cls[]).map(k => (
      <path key={k} d={rasterPaths[k]} fill={palette[k]} />
    ))}
  </svg>
);

/* ---------- icons ---------- */

const ink = '#5b6b80';
const sky = '#2a9fe0';

const quickIcons = [
  <g key="save"><path d="M28 22H96L110 36V103H28ZM47 22V48H92V22M40 103V68H98V103" /><path d="M48 76H90M48 88H90" stroke="#a9b3bf" /><path d="M71 27h10v14h-10z" fill="#1e86d6" stroke="none" /><path d="M40 102H98" stroke="#2bb091" strokeWidth="4" /></g>,
  <g key="new"><path d="M145 57V103H227V51H176M178 24L188 38H227V51M178 24H184L190 28H227V38" /><g stroke="#f0603c"><circle cx="154" cy="35" r="8" /><path d="M154 18V25M154 45V53M136 35H144M164 35H172M142 23L147 28M161 42L166 47M166 23L161 28M147 42L142 47" /></g></g>,
  <path key="pick" d="M275 23L338 65L313 68L325 100L316 103L303 74L278 99Z" />,
  <g key="zin"><circle cx="415" cy="55" r="33" /><path d="M440 80L460 100" strokeWidth="9" /><path d="M415 37V73M397 55H433" stroke={sky} /></g>,
  <g key="zout"><circle cx="532" cy="55" r="33" /><path d="M557 80L577 100" strokeWidth="9" /><path d="M514 55H550" stroke={sky} /></g>,
  <path key="pan" d="M630 75V34Q632 26 638 28Q643 30 643 36V66V26Q646 18 654 19Q660 20 660 27V66V30Q664 22 671 25Q676 28 676 34V68V42Q681 36 687 40Q694 43 695 50V82Q694 103 672 103H652Q638 103 630 92L613 70Q612 62 620 62Q626 64 630 75" />,
  <g key="full"><path d="M747 24H731V40M796 24H812V40M747 103H731V87M796 103H812V87" /><path d="M746 38H796V88H746Z" stroke={sky} /></g>,
  <path key="refresh" d="M847 52Q858 22 888 22Q914 24 926 48M926 30V48H908M929 76Q918 103 888 103Q862 101 850 78M850 96V77H868" />,
  <g key="free"><path d="M1003 24Q968 16 964 55Q968 88 996 88Q1024 86 1030 62M1000 32Q976 32 974 54" /><path d="M1022 80L1044 101" strokeWidth="9" /><path d="M1031 22V48M1018 35H1044M1018 52H1044" stroke={sky} /></g>,
];

const QuickIcon = ({ index }: { index: number }) => (
  <svg width="39" height="32" viewBox={`${(index * 39 + 3) * 3} 12 117 96`} fill="none" stroke={ink} strokeWidth="3">
    {quickIcons[index]}
  </svg>
);

const FireIndexIcon = () => (
  <>
    <path d="M193 313Q190 336 196 346Q190 360 164 372Q136 388 136 412Q140 462 200 463Q268 460 272 398Q270 324 193 313Z" fill="#fff" stroke="#000" strokeWidth="6" strokeLinejoin="round" />
    <path d="M202 355Q208 378 184 390Q158 402 156 424Q164 456 202 457Q248 452 252 406Q246 366 202 355Z" fill="#eb9651" />
    <path d="M206 395Q206 412 190 418Q174 424 176 436Q180 454 206 454Q228 450 228 430Q226 408 206 395Z" fill="#f5c29c" />
  </>
);

const FireLevelIcon = () => (
  <>
    <rect x="456" y="279" width="216" height="216" rx="12" fill="#1b1b19" />
    <path d="M468 294H579V423H468Z" fill="#c5c7c9" />
    <path d="M588 294H663V423H588ZM468 435H525V483H468ZM534 435H663V483H534Z" fill="#f07d12" />
    <path d="M510 305Q530 320 536 340Q542 352 532 370L556 376Q554 396 534 392Q526 412 508 412Q486 402 486 376Q484 362 496 352Q490 362 500 366Q510 352 500 336Q514 346 512 362Q524 344 522 330Q520 314 510 305Z" fill="#f07d12" />
    <g fill="#fff" fontFamily="'Noto Sans CJK SC', sans-serif" fontWeight="700" textAnchor="middle">
      <text transform="translate(625 345) scale(.78 1.2)" fontSize="41">森林</text>
      <text transform="translate(625 411) scale(.78 1.2)" fontSize="41">火险</text>
      <text transform="translate(497 472) scale(.9 1.05)" fontSize="34">橙</text>
      <text transform="translate(598 472) scale(.62 1)" fontSize="36" letterSpacing="2" fontFamily="'Liberation Sans', sans-serif">WILD FIRE</text>
    </g>
  </>
);

const RouteIcon = () => (
  <g fill="none">
    <path d="M980 321Q950 317 922 323Q886 332 889 356Q894 386 934 386Q996 388 996 428Q992 464 946 464Q926 465 906 461" stroke={ink} strokeWidth="6" />
    <circle cx="997" cy="324" r="17" stroke="#f06a45" strokeWidth="6" />
    <circle cx="889" cy="459" r="17" stroke="#34ad93" strokeWidth="6" />
  </g>
);

const TruckIcon = () => (
  <g fill="none" strokeWidth="12" strokeLinecap="round" strokeLinejoin="round">
    <path d="M1322 313H1264L1242 339H1190Q1179 339 1179 350V382L1196 400M1297 318V340" stroke="#a084f0" />
    <path d="M1202 449H1190Q1179 448 1179 436V408H1297V339H1348Q1360 341 1366 352L1383 384V438Q1382 449 1368 449H1362M1336 387H1380M1276 449H1310" stroke="#37064b" />
    <circle cx="1228" cy="441" r="21" stroke="#37064b" /><circle cx="1336" cy="441" r="21" stroke="#37064b" />
  </g>
);

const AlarmIcon = () => (
  <g fill="none" strokeLinecap="round">
    <path d="M140 265V207Q144 161 188 161Q234 163 238 207V265" stroke="#d8463a" strokeWidth="10" />
    <rect x="112" y="267" width="154" height="31" rx="15" stroke="#d8463a" strokeWidth="10" />
    <path d="M185 119V142M138 129L149 149M235 129L224 149M107 159L125 170M268 159L250 170" stroke="#eba29c" strokeWidth="10" />
  </g>
);

const NdviIcon = () => (
  <>
    <path d="M467 123H549V293H467Z" fill="#fcf2df" />
    <path d="M467 164H509V204H467ZM510 245H549V293H510Z" fill="#a5cfe7" />
    <circle cx="567" cy="197" r="45" fill="#fff" />
    <path d="M512 165H533Q550 152 582 156V239Q552 244 534 228L523 208H512Z" fill="#daecd7" />
    <path d="M582 158V236M524 204H582M467 164H530M467 204H524M467 245H549M510 123V293M549 152V123H467V293H549V244" fill="none" stroke={ink} strokeWidth="5" />
    <circle cx="567" cy="197" r="45" fill="none" stroke="#8491a5" strokeWidth="6" />
    <path d="M596 235L633 274" stroke={ink} strokeWidth="10" />
  </>
);

const NdwiIcon = () => (
  <>
    <path d="M810 190Q832 210 850 194L870 187Q880 168 912 168L932 174V240L912 243V292H810Z" fill="#a5cfe7" />
    <path d="M912 152V123H810V293H912V243" fill="none" stroke={ink} strokeWidth="6" />
    <path d="M812 190Q820 202 838 201Q850 188 866 188M820 221Q830 232 844 226Q856 214 870 220M873 200Q886 192 900 203Q914 210 922 203M890 171Q904 186 918 178L930 172" fill="none" stroke={sky} strokeWidth="5" />
    <path d="M932 162V236" stroke={ink} strokeWidth="5" />
    <circle cx="912" cy="197" r="45" fill="none" stroke="#8491a5" strokeWidth="6" />
    <path d="M942 235L979 274" stroke={ink} strokeWidth="10" />
  </>
);

const WaterIcon = () => {
  const d = 'M1179 124Q1184 160 1204 168Q1230 176 1244 188Q1262 204 1268 222Q1280 244 1320 248M1244 188Q1280 154 1304 172L1322 190M1226 178Q1226 206 1206 218Q1182 236 1188 256L1202 274M1188 246Q1172 250 1174 268M1275 234Q1280 252 1262 267';
  return (
    <g fill="none">
      <path d={d} stroke="#d4e8f6" strokeWidth="16" />
      <path d={d} stroke={sky} strokeWidth="6" />
      <rect x="1155" y="123" width="170" height="170" rx="3" stroke={ink} strokeWidth="6" />
    </g>
  );
};

const Magnifier = () => (
  <svg width="17" height="18" viewBox="1 0 17 18"><circle cx="7" cy="6.5" r="5.2" fill="#dcedfb" stroke="#5b9bd9" strokeWidth="1.4" /><path d="M10.500 11L15.500 16" stroke="#8a6a2c" strokeWidth="3.4" /><path d="M11 11.600L15 15.600" stroke="#f3c54e" strokeWidth="1.8" /></svg>
);

const ArrowIcon = ({ up }: { up?: boolean }) => (
  <svg width="13" height="13" viewBox="0 0 13 13">
    <path transform={up ? undefined : 'rotate(180 6.5 6)'} d="M6.500 .5L12.500 6.500H9.500V11H3.500V6.500H.5Z" fill="#4bb9dc" stroke="#7ccbe2" strokeWidth=".6" />
  </svg>
);

const GoIcon = () => (
  <svg width="15" height="15" viewBox="0 0 15 15"><circle cx="7.5" cy="7.5" r="7" fill="#2f55c8" stroke="#6b86dc" strokeWidth=".8" /><path d="M3 7.5H11M7.5 4L11 7.5L7.5 11" fill="none" stroke="#fff" strokeWidth="1.8" /></svg>
);

const Chevron = ({ dir }: { dir: 'up' | 'down' | 'left' | 'right' }) => {
  const d = { up: 'M5 12L9.500 7.500L14 12', down: 'M5 7L9.500 11.500L14 7', left: 'M12 5L7.500 9.500L12 14', right: 'M7 5L11.500 9.500L7 14' }[dir];
  const v = dir === 'up' || dir === 'down';
  return <svg width="19" height={v ? 12 : 19} viewBox={v ? '0 4 19 12' : '0 0 19 19'}><path d={d} fill="none" stroke="#555" strokeWidth="2.2" /></svg>;
};

const Expander = ({ open, soft }: { open?: boolean; soft?: boolean }) => (
  <svg width={soft ? 9 : 11} height={soft ? 9 : 11} viewBox={soft ? '1 1 9 9' : '0 0 11 11'}>
    {soft ? <rect x="1.5" y="1.5" width="8" height="8" fill="#fff" stroke="#8e8e8e" /> : <rect x=".5" y=".5" width="10" height="10" fill="#f2f2f2" stroke="#8e8e8e" />}
    <path d={open ? 'M2.500 5.500H8.500' : 'M3 5.500H8M5.500 3V8'} stroke={soft ? '#2b7fd0' : '#2f4fa0'} />
  </svg>
);

type IconKind = 'image' | 'grid' | 'line' | 'region' | 'network' | 'img' | 'udb' | 'maps' | 'map';

const TreeIcon = ({ kind }: { kind: IconKind }) => (
  <svg width="20" height="20" viewBox="-1 0 20 20" fill="none">
    {kind === 'image' && <><path d="M1.500 4.500H16.500V16.500H1.500Z" fill="#fff" stroke="#5b96d4" strokeWidth="1.3" /><path d="M4 6.500H14V14.500H4Z" fill="#c9cbe6" /><path d="M4 9.500L8 10L10 8L14 7.500V12L8 14H4Z" fill="#c9c48e" /></>}
    {kind === 'grid' && <><path d="M4.500 2V18M9.500 2V18M13.500 2V18" stroke="#7fa6cc" strokeWidth="1.3" /><path d="M1 5.500H17M1 10.500H17M1 14.500H17" stroke="#2a62c0" strokeWidth="1.3" /></>}
    {kind === 'line' && <path d="M0 14L5 9L9 13L19 4" stroke="#9fb6c6" />}
    {kind === 'region' && <path d="M2.500 17V9.500L9 3.500L16 9.500V17Z" stroke="#79a6c4" strokeWidth="1.3" />}
    {kind === 'network' && <path d="M2 3L9 9L16 3M2 17L9 9L16 17M8 3L15 9M2 11L8 17" stroke="#9db4cc" />}
    {(kind === 'img' || kind === 'udb') && <><path d="M1.500 4V15.500L4 17M13.500 4V8" stroke="#7fb0d0" strokeWidth="1.4" /><ellipse cx="7.500" cy="4" rx="6" ry="2.800" fill="#fff" stroke="#6fa6cc" strokeWidth="1.5" /><text x="3.5" y="18.500" fontSize="12.5" fontFamily="'Liberation Sans', sans-serif" fontWeight="700" fill="#6b9fd6" textLength="15" lengthAdjust="spacingAndGlyphs">{kind === 'img' ? 'IMG' : 'UDB'}</text></>}
    {kind === 'maps' && <><path d="M1.500 13.500V3.500H14.500" fill="none" stroke="#3f7fc8" strokeWidth="2" /><path d="M4.500 6H17.500V17.500H4.500Z" fill="#fff" stroke="#4a8bd0" strokeWidth="1.4" /><path d="M8 8H15.500V15.500Q14 10 8 8Z" fill="#7dbcf5" /><path d="M6.500 11L11 15.500H6.500Z" fill="#7dbcf5" /></>}
    {kind === 'map' && <><path d="M1.500 4.500H16.500V16.500H1.500Z" fill="#fff" stroke="#5b96d4" strokeWidth="1.6" /><path d="M4 6.500H8Q9 9 12 8.500L14.500 12V14.500H12Q10 10.500 4 9.500Z" fill="#8cc4f8" /><path d="M4 11.500L7.500 14.500H4Z" fill="#8cc4f8" /></>}
  </svg>
);

const EyeOpen = () => (
  <svg width="19" height="20" viewBox="0 0 19 20"><path d="M1 10.500Q9.500 1.500 18 10.500Q9.500 18.500 1 10.500Z" fill="#fff" stroke="#1478cc" strokeWidth="1.6" /><circle cx="9.500" cy="10" r="3.600" fill="#fff" stroke="#1478cc" strokeWidth="2.600" /></svg>
);

const EyeShut = () => (
  <svg width="19" height="20" viewBox="0 0 19 20"><path d="M1 7Q9.500 13 18 7M4 9L2 12.500M8 10L7 14M12 10L12.500 14M15 9L17 12.500" fill="none" stroke="#a5aab2" strokeWidth="2" /></svg>
);

const VectorTools = () => (
  <svg width="60" height="20" viewBox="0 0 60 20" fill="none" stroke="#a9aeb6" strokeWidth="1.600">
    <path d="M5 3V17L9 13L15 12Z" fill="#a5aab4" stroke="none" />
    <path d="M20 15L30 4L33 7L23 16H20Z" /><path d="M28 11H35V17H28Z" fill="#a5aab4" /><path d="M29.500 11V8H33.500V11" />
    <path d="M40 10H45M51 10H57M48.500 2V7M48.500 13V18M47 10H50" />
  </svg>
);

const LayerIcon = ({ kind }: { kind: 'grid' | 'image' | 'line' | 'region' }) => (
  <svg width="20" height="20" viewBox="0 0 20 20" fill="none">
    {kind === 'grid' && <path d="M5.500 2V18M10.500 2V18M15.500 2V18M2 5.500H18M2 10.500H18M2 14.500H18" stroke="#3d7fb8" strokeWidth="1.600" />}
    {kind === 'image' && <><path d="M2.500 3.500H17.500V16.500H2.500Z" fill="#fff" stroke="#4f8fd0" strokeWidth="1.500" /><path d="M5 6H15V14H5Z" fill="#dcd6a4" /><path d="M5 6H9L5 9ZM15 9V14H9Z" fill="#b9c4e8" /></>}
    {kind === 'line' && <path d="M1 1L19 19" stroke="#4a6a94" />}
    {kind === 'region' && <path d="M1.500 18V8L9.500 2L18 8V18Z" fill="#dccfe2" stroke="#666" />}
  </svg>
);

const ShirtIcon = () => (
  <svg width="39" height="32" viewBox="0 0 39 32"><path d="M14 5H18Q21 8 24 5H28L36 12L32 17L29 15.500V29H15V15.500L12 17L8 12Z" fill="#888" /></svg>
);
const MinIcon = () => <svg width="39" height="32" viewBox="0 0 39 32"><path d="M12 17H31" stroke="#000" strokeWidth="2" /></svg>;
const RestoreIcon = () => <svg width="39" height="32" viewBox="0 0 39 32" fill="none" stroke="#000"><path d="M10.500 13.500H30.500V25.500H10.500Z" /><path d="M14 10.500H34V23" strokeWidth="1.800" /></svg>;
const QuitIcon = () => <svg width="39" height="32" viewBox="0 0 39 32"><path d="M14 10.500L27.500 24M27.500 10.500L14 24" stroke="#000" strokeWidth="1.600" /></svg>;

/* ---------- data ---------- */

const groups = [
  { name: '灾情分析', w: 251, pad: 2, itemW: 122, shift: 3, items: [
    { name: '火险指数', icon: <FireIndexIcon />, vb: '87 279' },
    { name: '火险分级', icon: <FireLevelIcon />, vb: '454 279' },
  ] },
  { name: '救援应急', w: 351, pad: 2, itemW: 114, shift: 6, items: [
    { name: '救援路径', icon: <RouteIcon />, vb: '828 279' },
    { name: '物资配送', icon: <TruckIcon />, vb: '1171 279' },
    { name: '应急选址', icon: <AlarmIcon />, vb: '74 99' },
  ] },
  { name: '快速提取', w: 351, pad: 3, itemW: 114, shift: 5, items: [
    { name: 'NDVI', icon: <NdviIcon />, vb: '444 99' },
    { name: 'NDWI', icon: <NdwiIcon />, vb: '786 99' },
    { name: '水文分析', icon: <WaterIcon />, vb: '1128 99' },
  ] },
];

const layers: { name: string; kind: 'grid' | 'image' | 'line' | 'region'; sel?: boolean }[] = [
  { name: 'fenji@xian', kind: 'grid', sel: true },
  { name: 'OutputF@xian', kind: 'grid' },
  { name: '西安主次要道路@xian', kind: 'line' },
  { name: '西安@xian', kind: 'region' },
  { name: 'VEG_re@xian', kind: 'image' },
  { name: 'TDVI_re@xian', kind: 'image' },
  { name: 'swir_re@xian', kind: 'image' },
];

const L: GuideKind = 'line';
const T: GuideKind = 'tee';
const tree: { name: string; kind: IconKind; guides: GuideKind[]; sel?: boolean }[] = [
  ...['NIR_re', 'MODIS_re', 'LST_re', 'G_re', 'FIRE_re', 'B_re'].map(name => ({ name, kind: 'image' as IconKind, guides: [L, L, T] })),
  ...['NDWIResult', 'NDVIResult', 'tdvi'].map(name => ({ name, kind: 'grid' as IconKind, guides: [L, L, T] })),
  { name: '西安主次要道路', kind: 'line', guides: [L, L, T] },
  { name: '西安', kind: 'region', guides: [L, L, T] },
  { name: '西安主次要道路_N', kind: 'network', guides: [L, L, 'plus'] },
  { name: '西安_p', kind: 'region', guides: [L, L, T] },
  { name: 'VectorizeResult', kind: 'region', guides: [L, L, T] },
  { name: 'OutputF', kind: 'grid', guides: [L, L, T] },
  { name: 'fenji', kind: 'grid', guides: [L, L, 'end'], sel: true },
  { name: 'dem_r1', kind: 'img', guides: [L, 'plus'] },
  { name: 'SurfaceAnalyst', kind: 'udb', guides: [L, 'plusend'] },
  { name: '地图', kind: 'maps', guides: ['minus'] },
  ...['xian', 'hyd', 'TDVI_re@xian', 'ClipResult_1@xian', 'TDVI@xian', 'ClipResult_1@xian', 'ConvertToRaster'].map(name => ({ name, kind: 'map' as IconKind, guides: [L, T] })),
];

const isCjk = (s: string) => /[\u4e00-\u9fff]/.test(s);

/* ---------- app ---------- */

const CloseMark = ({ color }: { color: string }) => (
  <CloseBox $color={color}>
    <svg width="16" height="16" viewBox="0 0 16 16"><path d="M3 3L13 13M13 3L3 13" stroke="#fff" strokeWidth="1.1" /></svg>
  </CloseBox>
);

export default function App() {
  return (
    <Window>
      <GlobalStyle />
      <TitleBar>
        <TitleLeft>
          <QuickTools>{quickIcons.map((_, i) => <QuickIcon key={i} index={i} />)}</QuickTools>
          <RibbonTabs>
            <RibbonTab $w={114}>开始</RibbonTab>
            <RibbonTab $w={124} $active>处理自动化</RibbonTab>
            <TabRule />
          </RibbonTabs>
        </TitleLeft>
        <Title>森林火灾监控系统</Title>
        <WindowButtons><ShirtIcon /><MinIcon /><RestoreIcon /><QuitIcon /></WindowButtons>
      </TitleBar>

      <Ribbon>
        <RibbonFrame>
          {groups.map(g => (
            <RibbonGroup key={g.name} $w={g.w} $pad={g.pad}>
              <RibbonItems>
                {g.items.map(it => (
                  <RibbonItem key={it.name} $w={g.itemW}>
                    <svg width="72" height="72" viewBox={`${it.vb} 216 216`}>{it.icon}</svg>
                    {it.name}
                  </RibbonItem>
                ))}
              </RibbonItems>
              <GroupLabel $shift={g.shift}>{g.name}</GroupLabel>
            </RibbonGroup>
          ))}
        </RibbonFrame>
      </Ribbon>

      <Body>
        <Sidebar>
          <SideTabs>
            <SideTab $active>数据管理</SideTab>
            <SideTab>鹰眼视图</SideTab>
            <SideTabRule />
          </SideTabs>
          <SidePanel>
            <LayerBox>
              <SearchBar $h={27} $left={30} $right={61}>
                <BarEnd $pad={2}><Magnifier /><Caret /></BarEnd>
                <div />
                <BarEnd $pad={5} $gap={10}><ArrowIcon /><ArrowIcon up /></BarEnd>
              </SearchBar>
              <LayerBody>
                <Rows>
                  {layers.map(l => (
                    <LayerRow key={l.name}>
                      <LayerSlot $w={14}>{l.kind === 'grid' && <Expander soft />}</LayerSlot>
                      {l.kind === 'grid' ? <EyeOpen /> : <EyeShut />}
                      {(l.kind === 'line' || l.kind === 'region') && <VectorTools />}
                      <LayerIcon kind={l.kind} />
                      <LayerName $sel={l.sel} $cjk={isCjk(l.name)}>{l.name}</LayerName>
                    </LayerRow>
                  ))}
                </Rows>
                <ScrollV $thumbTop={21} $thumb={38}><Chevron dir="up" /><Chevron dir="down" /></ScrollV>
              </LayerBody>
            </LayerBox>
            <NavBar><Magnifier /><GoIcon /><Caret /></NavBar>
            <SearchBar $h={26} $left={30} $right={80}>
              <BarEnd $pad={2}><Magnifier /><Caret /></BarEnd>
              <div />
              <BarEnd $pad={5} $gap={10}><ArrowIcon /><ArrowIcon up /></BarEnd>
            </SearchBar>
            <TreeBox>
              <TreeBody>
                <Rows $top={1}>
                  {tree.map((n, i) => (
                    <TreeRow key={i}>
                      {n.guides.map((k, j) => (
                        <Guide key={j} $kind={k}>
                          {(k === 'plus' || k === 'plusend') && <Expander />}
                          {k === 'minus' && <Expander open />}
                        </Guide>
                      ))}
                      <TreeIcon kind={n.kind} />
                      <TreeName $sel={n.sel} $cjk={isCjk(n.name)}>{n.name}</TreeName>
                    </TreeRow>
                  ))}
                </Rows>
                <ScrollV $thumbTop={134} $thumb={284}><Chevron dir="up" /><Chevron dir="down" /></ScrollV>
              </TreeBody>
              <ScrollH><Chevron dir="left" /><Chevron dir="right" /></ScrollH>
            </TreeBox>
          </SidePanel>
        </Sidebar>

        <Documents>
          <DocTabs>
            <DocTab $active $w={163}>xian<CloseMark color="#ff0000" /></DocTab>
            <DocTab $w={158}>hyd<CloseMark color="#ff8080" /></DocTab>
          </DocTabs>
          <MapFrame>
            <MapView>
              <FireMap />
              <MapCredit>©SuperMap</MapCredit>
            </MapView>
          </MapFrame>
        </Documents>
      </Body>

      <StatusBar>
        <span>坐标：</span>
        <Coords>X= 12130340.4077387 Y= 4064978.30237268</Coords>
      </StatusBar>
    </Window>
  );
}
